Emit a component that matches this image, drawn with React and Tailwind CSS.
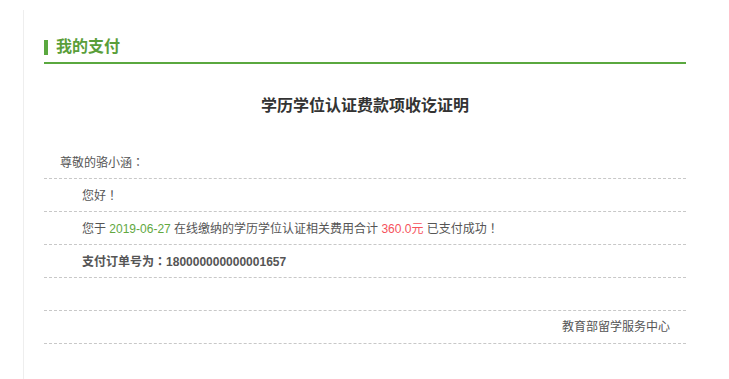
import React from "react";

const font = {
  fontFamily: '"Liberation Sans", "Noto Sans CJK SC", sans-serif',
};

// 全角标点居中显示
const P = ({ children }) => (
  <span className="font-['Noto_Sans_CJK_TC',sans-serif]">{children}</span>
);

const Row = ({ className = "", children }) => (
  <div
    className={`h-[33px] leading-[32px] border-b border-dashed border-[#c8c8c8] text-[12px] text-[#555] ${className}`}
  >
    {children}
  </div>
);

const App = () => {
  return (
    <div className="min-h-screen bg-white pt-[10px] pl-[23px]" style={font}>
      <div className="min-h-[369px] border-l border-[#eeeeee] pl-[20px] pr-[43px] pt-[25px]">
        {/* 标题 */}
        <div className="border-b-2 border-[#5aa83f] pb-[3px]">
          <div className="flex h-[24px] items-center">
            <span className="mr-[8px] h-[15px] w-[4px] bg-[#5aa83f]"></span>
            <span className="text-[16px] font-bold text-[#5a9e3a]">
              我的支付
            </span>
          </div>
        </div>

        <h1 className="mt-[30px] text-center text-[16px] font-bold leading-[24px] text-[#333]">
          学历学位认证费款项收讫证明
        </h1>

        <div className="mt-[28px]">
          <Row className="pl-[16px]">
            尊敬的骆小涵<P>：</P>
          </Row>
          <Row className="pl-[38px]">
            您好<P>！</P>
          </Row>
          <Row className="pl-[38px]">
            您于 <span className="text-[#62a83f]">2019-06-27</span>{" "}
            在线缴纳的学历学位认证相关费用合计{" "}
            <span className="text-[#f5525c]">360.0元</span> 已支付成功<P>！</P>
          </Row>
          <Row className="pl-[38px] font-bold text-[#333]">
            支付订单号为<P>：</P>180000000000001657
          </Row>
          <Row></Row>
          <Row className="pr-[16px] text-right">教育部留学服务中心</Row>
        </div>
      </div>
    </div>
  );
};

export default App;
